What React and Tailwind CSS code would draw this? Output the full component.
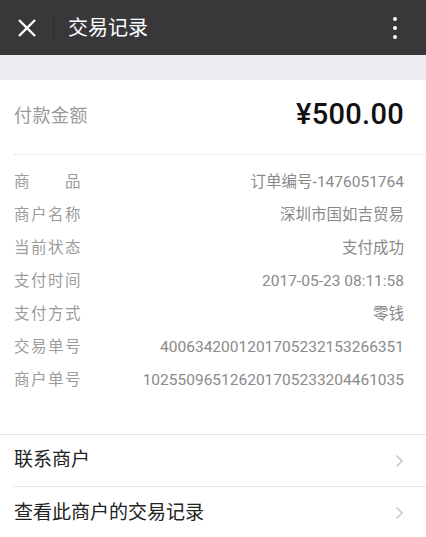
import React from 'react';

const details = [
    { label: '商　　品', value: '订单编号-1476051764' },
    { label: '商户名称', value: '深圳市国如吉贸易' },
    { label: '当前状态', value: '支付成功' },
    { label: '支付时间', value: '2017-05-23 08:11:58' },
    { label: '支付方式', value: '零钱' },
    { label: '交易单号', value: '4006342001201705232153266351' },
    { label: '商户单号', value: '102550965126201705233204461035' },
];

const Chevron = () => (
    <svg width="9" height="14" viewBox="0 0 9 14" fill="none">
        <path d="M1.5 1.5L7 7l-5.5 5.5" stroke="#c8c8c8" strokeWidth="1.6" />
    </svg>
);

const App = () => {
    return (
        <div className="w-[426px] h-[537px] overflow-hidden bg-white font-['Roboto','Noto_Sans_CJK_SC',sans-serif]">
            {/* Header */}
            <div className="h-[55px] bg-[#38383a] flex items-center">
                <div className="w-[53px] flex justify-center">
                    <svg width="20" height="20" viewBox="0 0 20 20">
                        <path d="M2 2L18 18M18 2L2 18" stroke="#fff" strokeWidth="2.4" />
                    </svg>
                </div>
                <div className="w-px h-[26px] bg-[#2f2f31]" />
                <h1 className="ml-[14px] text-[20px] text-white leading-none">交易记录</h1>
                <div className="ml-auto mr-[29px] flex flex-col gap-[5px]">
                    <span className="w-[4px] h-[4px] rounded-full bg-white" />
                    <span className="w-[4px] h-[4px] rounded-full bg-white" />
                    <span className="w-[4px] h-[4px] rounded-full bg-white" />
                </div>
            </div>

            <div className="h-[25px] bg-[#eeeef2]" />

            {/* Amount */}
            <div className="pl-[14px]">
                <div className="h-[74px] pr-[22px] flex items-center justify-between">
                    <span className="text-[18px] tracking-[0.5px] text-[#9a9a9a] -mt-[3px]">付款金额</span>
                    <span className="text-[29px] font-medium text-[#111] tracking-[0.3px] -mt-[4px]">¥500.00</span>
                </div>
                <div className="border-t border-dotted border-[#dedede]" />

                {/* Details */}
                <div className="pt-[11px] pr-[22px] flex flex-col">
                    {details.map((row) => (
                        <div key={row.label} className="h-[33px] flex items-center justify-between">
                            <span className="text-[15.5px] tracking-[1.5px] text-[#9c9c9c] whitespace-pre">{row.label}</span>
                            <span className="text-[15.5px] text-[#8a8a8a]">{row.value}</span>
                        </div>
                    ))}
                </div>
            </div>

            <div className="h-[37px]" />

            {/* Actions */}
            <div className="border-t border-[#e3e3e3]">
                <div className="pl-[14px]">
                    <div className="h-[52px] pr-[22px] flex items-center justify-between border-b border-[#e6e6e6]">
                        <span className="text-[19px] text-[#222]">联系商户</span>
                        <Chevron />
                    </div>
                    <div className="h-[52px] pr-[22px] flex items-center justify-between">
                        <span className="text-[19px] text-[#222]">查看此商户的交易记录</span>
                        <Chevron />
                    </div>
                </div>
            </div>
        </div>
    );
};

export default App;
